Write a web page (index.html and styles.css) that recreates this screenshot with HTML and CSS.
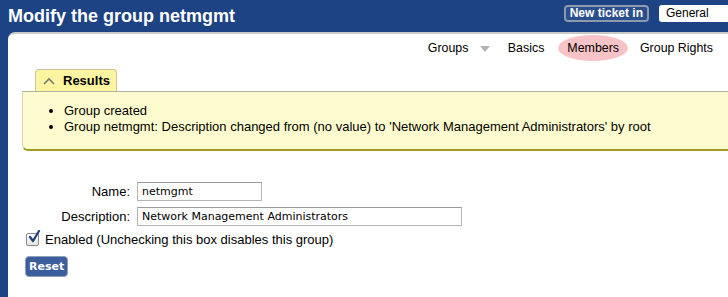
FILE: index.html
```html
<!DOCTYPE html>
<html lang="en">
<head>
<meta charset="UTF-8">
<title>Modify the group netmgmt</title>
<link rel="stylesheet" href="styles.css">
</head>
<body>

<div class="header">
<h1>Modify the group netmgmt</h1>
<div class="quick">
<button class="newticket">New ticket in</button>
<div class="queue">General</div>
</div>
</div>

<div class="panel">
<div class="menu">
<span class="item">Groups <span class="down"></span></span>
<span class="item">Basics</span>
<span class="item current">Members</span>
<span class="item">Group Rights</span>
</div>

<div class="results">
<div class="tab"><span class="chevron">
<svg width="12" height="8" viewBox="0 0 12 8"><path d="M1 7 L6 2 L11 7" fill="none" stroke="#7a7a70" stroke-width="1.6"/></svg>
</span>Results</div>
<div class="box">
<ul>
<li>Group created</li>
<li>Group netmgmt: Description changed from (no value) to 'Network Management Administrators' by root</li>
</ul>
</div>
</div>

<form class="form">
<div class="row">
<label class="label">Name:</label>
<input class="field short" type="text" value="netmgmt">
</div>
<div class="row">
<label class="label">Description:</label>
<input class="field long" type="text" value="Network Management Administrators">
</div>
<label class="check">
<span class="box-check">
<svg width="14" height="14" viewBox="0 0 14 14"><path d="M3 7 L6 11 L12 1" fill="none" stroke="#1f3f78" stroke-width="2.2" stroke-linecap="round" stroke-linejoin="round"/></svg>
</span>
<span>Enabled (Unchecking this box disables this group)</span>
</label>
<button type="button" class="reset">Reset</button>
</form>
</div>

</body>
</html>
```

FILE: styles.css
```css
body {
font-family: "Liberation Sans", Arial, sans-serif;
font-size: 13px;
margin: 0;
background-color: #1e4384;
height: 297px;
overflow: hidden;
}
.header {
display: flex;
justify-content: space-between;
align-items: flex-start;
height: 32px;
}
h1 {
margin: 0;
padding: 6px 0 0 8px;
color: white;
font-size: 18px;
line-height: 21px;
}
.quick {
display: flex;
align-items: center;
padding-top: 5px;
}
.newticket {
font-family: "Liberation Sans", Arial, sans-serif;
font-size: 12px;
font-weight: bold;
color: white;
background-color: #2b4f8e;
border: 2px solid #8d99ad;
border-radius: 4px;
height: 17px;
padding: 0 4px;
line-height: 13px;
}
.queue {
margin-left: 10px;
background-color: white;
border-radius: 3px 0 0 3px;
height: 17px;
width: 62px;
padding-left: 7px;
font-size: 12px;
line-height: 17px;
}
.panel {
margin-left: 8px;
background-color: white;
border-top: 2px solid #c9c9c9;
border-top-left-radius: 7px;
height: 263px;
}
.menu {
display: flex;
justify-content: flex-end;
align-items: center;
height: 28px;
padding-right: 6px;
font-size: 12.4px;
}
.item {
padding: 0 9px;
line-height: 26px;
}
.item.current {
background-color: #f8c3c6;
border-radius: 50%;
padding: 0 9px;
margin: 0 3px 0 5px;
}
.down {
display: inline-block;
width: 0;
height: 0;
margin-left: 8px;
border-left: 5px solid transparent;
border-right: 5px solid transparent;
border-top: 6px solid #b5b5b5;
vertical-align: middle;
}
.results {
margin: 7px 0 0 14px;
}
.tab {
display: inline-flex;
align-items: center;
margin-left: 13px;
height: 21px;
padding: 0 6px 0 7px;
background-color: #fdf4a2;
border: 1px solid #c8c39a;
border-bottom: none;
border-radius: 4px 4px 0 0;
font-weight: bold;
}
.chevron {
display: inline-flex;
margin-right: 8px;
}
.box {
background-color: #fefcce;
border-top: 1px solid #b2b09c;
border-left: 1px solid #d9d6b8;
border-bottom: 2px solid #a29b22;
border-bottom-left-radius: 6px;
height: 57px;
}
.box ul {
margin: 0;
padding: 11px 0 0 41px;
}
.box li {
line-height: 16px;
}
.form {
margin: 31px 0 0 0;
}
.row {
display: flex;
align-items: center;
margin-bottom: 6px;
}
.label {
width: 122px;
text-align: right;
padding-right: 7px;
}
.field {
font-family: "DejaVu Sans", sans-serif;
font-size: 11px;
height: 19px;
box-sizing: border-box;
border: 1px solid #b4b4b4;
border-top-color: #9a9a9a;
padding: 0 4px;
}
.short {
width: 125px;
}
.long {
width: 325px;
}
.check {
display: flex;
align-items: center;
margin: 5px 0 0 18px;
}
.box-check {
position: relative;
width: 11px;
height: 11px;
margin-right: 6px;
border: 1px solid #8a8a8a;
border-radius: 2px;
background: linear-gradient(#ffffff, #e4e4e4);
}
.box-check svg {
position: absolute;
left: 0;
top: -4px;
}
.reset {
margin: 9px 0 0 17px;
font-family: "DejaVu Sans", sans-serif;
font-size: 11px;
font-weight: bold;
color: white;
background-color: #3c5e9c;
border: 1px solid #8e9fb8;
border-radius: 4px;
height: 21px;
padding: 0 3px;
}
```
